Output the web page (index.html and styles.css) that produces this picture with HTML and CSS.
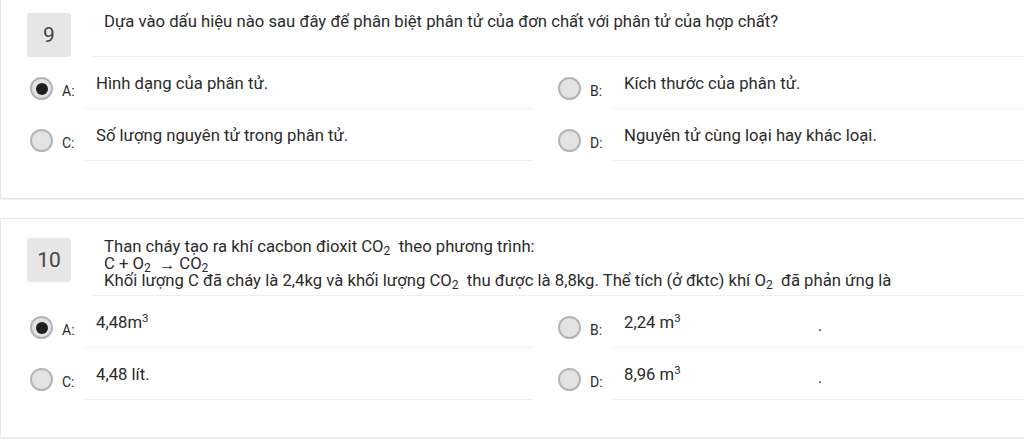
FILE: index.html
```html
<!DOCTYPE html>
<html lang="vi">
<head>
<meta charset="utf-8">
<title>Câu hỏi</title>
<link rel="stylesheet" href="styles.css">
</head>
<body>
<div class="page">
  <section class="card card-first">
    <div class="q-head">
      <div class="q-num">9</div>
      <div class="q-text">Dựa vào dấu hiệu nào sau đây để phân biệt phân tử của đơn chất với phân tử của hợp chất?</div>
    </div>
    <div class="options">
      <div class="opt"><span class="radio checked"></span><span class="lbl">A:</span><div class="ans">Hình dạng của phân tử.</div></div>
      <div class="opt"><span class="radio"></span><span class="lbl">B:</span><div class="ans">Kích thước của phân tử.</div></div>
      <div class="opt"><span class="radio"></span><span class="lbl">C:</span><div class="ans">Số lượng nguyên tử trong phân tử.</div></div>
      <div class="opt"><span class="radio"></span><span class="lbl">D:</span><div class="ans">Nguyên tử cùng loại hay khác loại.</div></div>
    </div>
  </section>

  <section class="card">
    <div class="q-head">
      <div class="q-num">10</div>
      <div class="q-text q-multi">
        <div>Than cháy tạo ra khí cacbon đioxit CO<sub>2</sub>&nbsp; theo phương trình:</div>
        <div>C + O<sub>2</sub>&nbsp; <span class="arrow">→</span> CO<sub>2</sub></div>
        <div>Khối lượng C đã cháy là 2,4kg và khối lượng CO<sub>2</sub>&nbsp; thu được là 8,8kg. Thể tích (ở đktc) khí O<sub>2</sub>&nbsp; đã phản ứng là</div>
      </div>
    </div>
    <div class="options">
      <div class="opt"><span class="radio checked"></span><span class="lbl">A:</span><div class="ans">4,48m<sup>3</sup></div></div>
      <div class="opt"><span class="radio"></span><span class="lbl">B:</span><div class="ans">2,24 m<sup>3</sup><span class="dot">.</span></div></div>
      <div class="opt"><span class="radio"></span><span class="lbl">C:</span><div class="ans">4,48 lít.</div></div>
      <div class="opt"><span class="radio"></span><span class="lbl">D:</span><div class="ans">8,96 m<sup>3</sup><span class="dot">.</span></div></div>
    </div>
  </section>
</div>
</body>
</html>
```

FILE: styles.css
```css
html, body {
  margin: 0;
  padding: 0;
  background: #ffffff;
  overflow: hidden;
}

.page {
  width: 1024px;
  overflow: hidden;
  font-family: Roboto, "Noto Sans", sans-serif;
  color: #2b2b2b;
}

.card {
  width: 1100px;
  box-sizing: border-box;
  background: #ffffff;
  border: 1px solid #e8e8e8;
  border-right: none;
  box-shadow: 0 1px 0 #f0f0f0;
  padding: 19px 0 37px 26px;
  margin-bottom: 19px;
}

.card-first {
  margin-top: -7px;
}

.q-head {
  display: flex;
  align-items: flex-start;
}

.q-num {
  flex: none;
  width: 44px;
  height: 44px;
  border-radius: 3px;
  background: #e6e6e6;
  color: #444444;
  font-size: 21px;
  display: flex;
  align-items: center;
  justify-content: center;
}

.q-text {
  flex: 1;
  margin-left: 21px;
  padding-left: 12px;
  min-height: 44px;
  box-sizing: border-box;
  border-bottom: 1px solid #efefef;
  font-size: 16.7px;
  line-height: 17px;
}

.q-multi {
  padding-bottom: 6px;
}

.q-text sub {
  font-size: 12px;
  line-height: 0;
  vertical-align: -3px;
}

.arrow {
  font-size: 16px;
  line-height: 0;
  vertical-align: -1px;
}

.options {
  display: grid;
  grid-template-columns: 502px 502px;
  column-gap: 26px;
  padding-left: 4px;
}

.opt {
  display: flex;
  align-items: flex-start;
}

.radio {
  flex: none;
  box-sizing: border-box;
  width: 23px;
  height: 23px;
  border-radius: 50%;
  background: #e3e3e3;
  border: 2px solid #b4b4b4;
  margin-top: 20px;
  margin-left: -1px;
  display: flex;
  align-items: center;
  justify-content: center;
}

.radio.checked::after {
  content: "";
  width: 12px;
  height: 12px;
  border-radius: 50%;
  background: #1f1f1f;
}

.lbl {
  flex: none;
  width: 23px;
  margin-left: 9px;
  margin-top: 27px;
  font-size: 14px;
  line-height: 15px;
}

.ans {
  flex: 1;
  padding: 17px 0 14px 11px;
  border-bottom: 1px solid #efefef;
  font-size: 16.7px;
  line-height: 20px;
}

.ans sup {
  font-size: 11.5px;
  line-height: 0;
  vertical-align: 6px;
}

.dot {
  margin-left: 137px;
  display: inline-block;
  position: relative;
  top: 3px;
}
```
